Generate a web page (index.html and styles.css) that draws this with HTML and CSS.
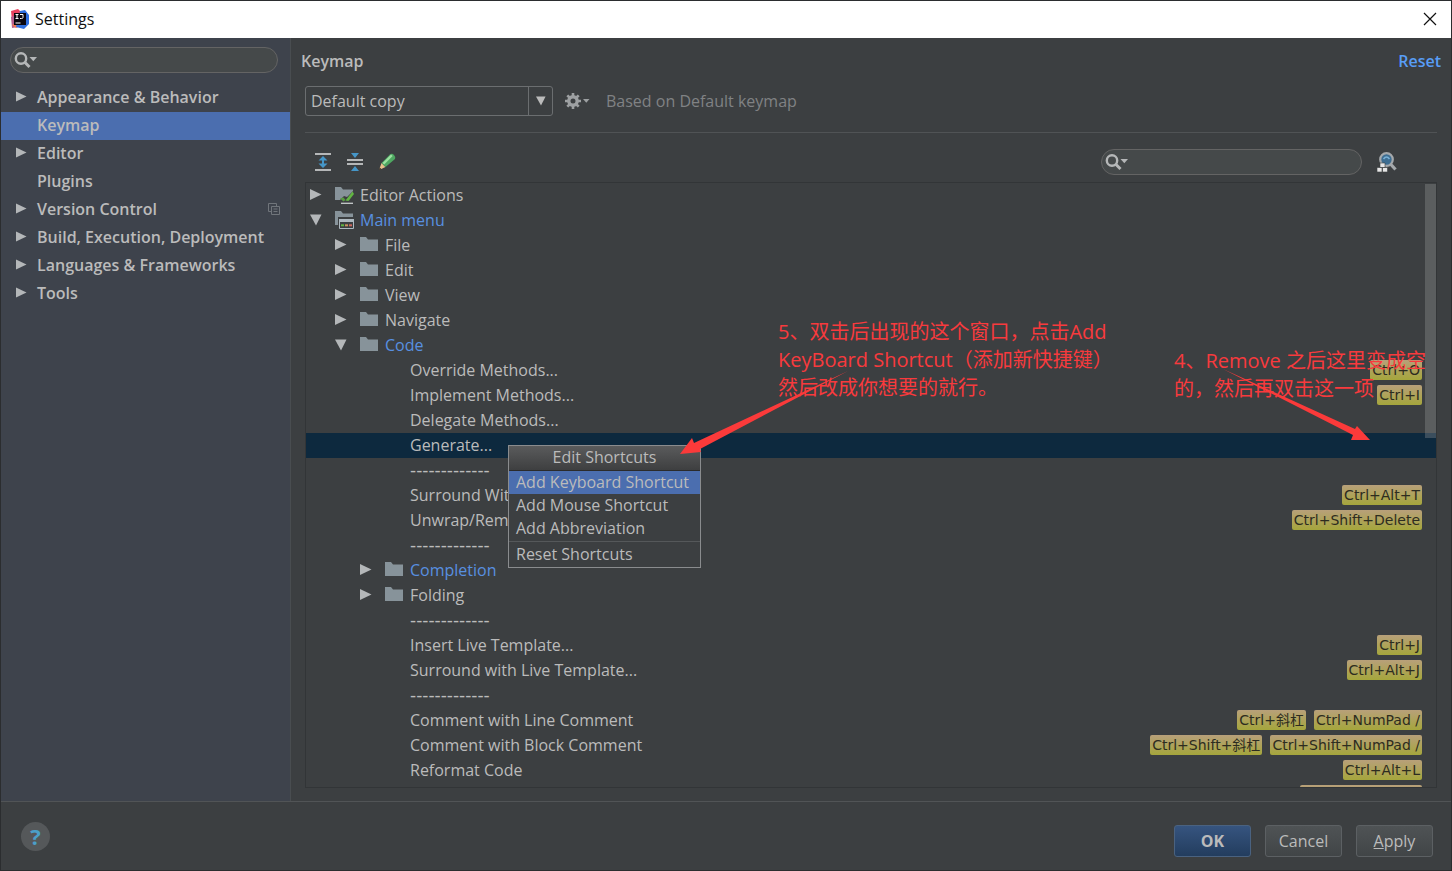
FILE: index.html
```html
<!DOCTYPE html>
<html lang="en">
<head>
    <meta charset="UTF-8">
    <meta name="viewport" content="width=device-width, initial-scale=1.0">
    <title>Settings</title>
    <link rel="stylesheet" href="styles.css">
</head>
<body>

    <!-- Shared icons -->
    <svg class="sprite" aria-hidden="true">
        <symbol id="right" viewBox="0 0 12 12"><path d="M0 0L11.500 5.500L0 11z"/></symbol>
        <symbol id="down" viewBox="0 0 12 12"><path d="M0 0.500H11.500L6 11.500z"/></symbol>
        <symbol id="search" viewBox="0 0 24 18">
            <circle cx="7" cy="7.500" r="5.200" fill="none" stroke="#b5b7b8" stroke-width="2.400"/>
            <path d="M10.500 11L15.500 16" stroke="#b5b7b8" stroke-width="3"/>
            <path d="M15.500 6h7.500l-3.700 4.300z" fill="#b5b7b8"/>
        </symbol>
        <symbol id="folder" viewBox="0 0 20 18"><path d="M0 1h6l2 2.500h10V15H0z" fill="#87939a"/></symbol>
        <symbol id="folder-edit" viewBox="0 0 20 18">
            <path d="M0 1h6l2 2.500h10V5l-6 6-3-1-4 4H0z" fill="#87939a"/>
            <path d="M10.500 14.500L17.500 5.500 19 8l-5.500 7z" fill="#62b543"/>
            <path d="M5 12.500l3.500-1 2 2.500-2 1.500z" fill="#5a9b43"/>
            <path d="M6 17.300h12" stroke="#c8cccd" stroke-width="1.300"/>
        </symbol>
        <symbol id="folder-menu" viewBox="0 0 20 18">
            <path d="M0 0h6l2 2.500h10V6H3v8H0z" fill="#87939a"/>
            <path d="M4.500 8.500h14v9h-14z" fill="#3c3f41" stroke="#aeb9c0"/>
            <path d="M4 8h15v3H4z" fill="#aeb9c0"/>
            <path d="M6 13.300h3v2H6z" fill="#62b543"/>
            <path d="M10 13.300h3v2h-3z" fill="#c9935c"/>
            <path d="M14 13.300h3v2h-3z" fill="#d06a5f"/>
        </symbol>
    </svg>

    <div class="window">
        <header class="titlebar">
            <svg class="logo" width="20" height="20" viewBox="0 0 20 20">
                <path d="M1 2L8 0l5 5-5 6-6 1z" fill="#e8415f"/>
                <path d="M1 8l4-2 3 12-6 1z" fill="#b8608f"/>
                <path d="M2 16l4 3 5-2-5-3z" fill="#f07a50"/>
                <path d="M10 2l5-1 4 5v9l-5 5-8-2z" fill="#2f6fe0"/>
                <path d="M4 4h12v12H4z" fill="#0a0710"/>
                <path d="M5.500 5.500h3M7 5.500v4M5.500 9.500h3M10 5.500h3v3q0 1-1.500 1H10M5.500 14h5" stroke="#fff" fill="none"/>
            </svg>
            <h1>Settings</h1>
            <button class="close-btn" aria-label="Close">
                <svg width="14" height="14" viewBox="0 0 14 14"><path d="M1 1l12 12M13 1L1 13" stroke="#111" stroke-width="1.200"/></svg>
            </button>
        </header>

        <div class="content">
            <nav class="sidebar">
                <label class="search-box">
                    <svg width="24" height="18"><use href="#search"/></svg>
                    <input type="text" aria-label="Search settings">
                </label>
                <ul class="sections">
                    <li><a href="#"><svg class="arrow"><use href="#right"/></svg>Appearance &amp; Behavior</a></li>
                    <li><a href="#" class="active"><span class="arrow"></span>Keymap</a></li>
                    <li><a href="#"><svg class="arrow"><use href="#right"/></svg>Editor</a></li>
                    <li><a href="#"><span class="arrow"></span>Plugins</a></li>
                    <li><a href="#"><svg class="arrow"><use href="#right"/></svg>Version Control
                        <svg class="project-icon" width="12" height="12" viewBox="0 0 12 12"><path d="M3 8.500H.5v-8h8V3M3.500 3.500h8v8h-8zM5.500 6h4M5.500 8.500h4" fill="none" stroke="#70757b"/></svg></a></li>
                    <li><a href="#"><svg class="arrow"><use href="#right"/></svg>Build, Execution, Deployment</a></li>
                    <li><a href="#"><svg class="arrow"><use href="#right"/></svg>Languages &amp; Frameworks</a></li>
                    <li><a href="#"><svg class="arrow"><use href="#right"/></svg>Tools</a></li>
                </ul>
            </nav>

            <main class="keymap">
                <div class="page-head">
                    <h2>Keymap</h2>
                    <a href="#" class="reset">Reset</a>
                </div>

                <div class="scheme">
                    <div class="combo">
                        <select aria-label="Keymap scheme"><option>Default copy</option></select>
                        <span class="combo-arrow"><svg width="10" height="10"><use href="#down"/></svg></span>
                    </div>
                    <button class="icon-btn" aria-label="Scheme actions">
                        <svg width="26" height="18" viewBox="0 0 26 18">
                            <circle cx="9" cy="9" r="4.200" fill="none" stroke="#9da0a2" stroke-width="3.400"/>
                            <path d="M9 1v3M9 14v3M1 9h3M14 9h3M3.300 3.300l2.200 2.200M12.500 12.500l2.200 2.200M14.700 3.300l-2.200 2.200M5.500 12.500l-2.200 2.200" stroke="#9da0a2" stroke-width="2.600"/>
                            <path d="M19 7h6.500l-3.200 3.700z" fill="#9da0a2"/>
                        </svg>
                    </button>
                    <span class="based-on">Based on Default keymap</span>
                </div>

                <div class="toolbar">
                    <button class="icon-btn" aria-label="Expand all">
                        <svg width="18" height="20" viewBox="0 0 18 20">
                            <path d="M1 2h16M1 18h16" stroke="#b5b7b8" stroke-width="2"/>
                            <path d="M9 4l4.500 4.500h-9zM9 16l4.500-4.500h-9z" fill="#4596c8"/><path d="M8 8h2v4H8z" fill="#4596c8"/>
                        </svg>
                    </button>
                    <button class="icon-btn" aria-label="Collapse all">
                        <svg width="18" height="20" viewBox="0 0 18 20">
                            <path d="M1 8h16M1 12h16" stroke="#b5b7b8" stroke-width="2"/>
                            <path d="M5 1h8L9 6zM5 19h8l-4-5z" fill="#4596c8"/>
                        </svg>
                    </button>
                    <button class="icon-btn" aria-label="Edit shortcut">
                        <svg width="18" height="20" viewBox="0 0 18 20">
                            <path d="M1 18l2.500-7 4 4z" fill="#e9c08b"/><path d="M1 18l.8-2.400 1.600 1.600z" fill="#222"/>
                            <path d="M3.500 11L12 2.500Q14 1 16 3t1 4L7.500 15z" fill="#4fa862"/>
                            <path d="M4.500 11L13 2.500l1.700 1.500L6.200 12.500z" fill="#9be0a0"/>
                        </svg>
                    </button>
                    <label class="search-box">
                        <svg width="24" height="18"><use href="#search"/></svg>
                        <input type="text" aria-label="Search actions">
                    </label>
                    <button class="icon-btn" aria-label="Find actions by shortcut">
                        <svg width="20" height="20" viewBox="0 0 20 20">
                            <circle cx="9.500" cy="7.500" r="6.300" fill="#3d6d91" stroke="#a4a8ab" stroke-width="2.200"/>
                            <path d="M6.500 7q3-4 6 0" fill="none" stroke="#78b0d6" stroke-width="1.500"/>
                            <path d="M13.500 12l5 5.500" stroke="#a4a8ab" stroke-width="3.200"/>
                            <path d="M3 11h5v4.500H3zM0 15.500h5V20H0zM5.500 15.500h5V20h-5z" fill="#e6e6e6" stroke="#3c3f41" stroke-width=".6"/>
                        </svg>
                    </button>
                </div>

                <div class="tree-panel">
                    <ul class="tree">
                        <li><svg class="arrow"><use href="#right"/></svg><svg class="folder"><use href="#folder-edit"/></svg>Editor Actions</li>
                        <li class="changed"><svg class="arrow"><use href="#down"/></svg><svg class="folder"><use href="#folder-menu"/></svg>Main menu</li>
                        <li class="level-1"><svg class="arrow"><use href="#right"/></svg><svg class="folder"><use href="#folder"/></svg>File</li>
                        <li class="level-1"><svg class="arrow"><use href="#right"/></svg><svg class="folder"><use href="#folder"/></svg>Edit</li>
                        <li class="level-1"><svg class="arrow"><use href="#right"/></svg><svg class="folder"><use href="#folder"/></svg>View</li>
                        <li class="level-1"><svg class="arrow"><use href="#right"/></svg><svg class="folder"><use href="#folder"/></svg>Navigate</li>
                        <li class="level-1 changed"><svg class="arrow"><use href="#down"/></svg><svg class="folder"><use href="#folder"/></svg>Code</li>
                        <li class="action">Override Methods...<span class="keys"><kbd>Ctrl+O</kbd></span></li>
                        <li class="action">Implement Methods...<span class="keys"><kbd>Ctrl+I</kbd></span></li>
                        <li class="action">Delegate Methods...</li>
                        <li class="action selected">Generate...
                            <div class="popup">
                                <div class="popup-header">Edit Shortcuts</div>
                                <button class="active">Add Keyboard Shortcut</button>
                                <button>Add Mouse Shortcut</button>
                                <button>Add Abbreviation</button>
                                <hr>
                                <button>Reset Shortcuts</button>
                            </div>
                        </li>
                        <li class="action divider">-------------</li>
                        <li class="action">Surround With...<span class="keys"><kbd>Ctrl+Alt+T</kbd></span></li>
                        <li class="action">Unwrap/Remove...<span class="keys"><kbd>Ctrl+Shift+Delete</kbd></span></li>
                        <li class="action divider">-------------</li>
                        <li class="level-2 changed"><svg class="arrow"><use href="#right"/></svg><svg class="folder"><use href="#folder"/></svg>Completion</li>
                        <li class="level-2"><svg class="arrow"><use href="#right"/></svg><svg class="folder"><use href="#folder"/></svg>Folding</li>
                        <li class="action divider">-------------</li>
                        <li class="action">Insert Live Template...<span class="keys"><kbd>Ctrl+J</kbd></span></li>
                        <li class="action">Surround with Live Template...<span class="keys"><kbd>Ctrl+Alt+J</kbd></span></li>
                        <li class="action divider">-------------</li>
                        <li class="action">Comment with Line Comment<span class="keys"><kbd>Ctrl+斜杠</kbd><kbd>Ctrl+NumPad /</kbd></span></li>
                        <li class="action">Comment with Block Comment<span class="keys"><kbd>Ctrl+Shift+斜杠</kbd><kbd>Ctrl+Shift+NumPad /</kbd></span></li>
                        <li class="action">Reformat Code<span class="keys"><kbd>Ctrl+Alt+L</kbd></span></li>
                        <li class="action"><span class="keys"><kbd class="cut-off"></kbd></span></li>
                    </ul>
                    <div class="scrollbar"></div>

                    <!-- Tutorial notes over the tree -->
                    <p class="note note-popup">5、双击后出现的这个窗口，点击Add<br>KeyBoard Shortcut（添加新快捷键）<br>然后改成你想要的就行。</p>
                    <svg class="pointer pointer-popup" width="170" height="84" viewBox="0 0 170 84"><path d="M168 0L20 78l1 3-21 2 12-16 2 5z"/></svg>
                    <p class="note note-row">4、Remove 之后这里变成空<br>的，然后再双击这一项</p>
                    <svg class="pointer pointer-row" width="148" height="72" viewBox="0 0 148 72"><path d="M1 0L133 60l2-3 13 14-19 0 2-5z"/></svg>
                </div>
            </main>
        </div>

        <footer class="buttons">
            <button class="help" aria-label="Help">?</button>
            <button class="btn ok">OK</button>
            <button class="btn">Cancel</button>
            <button class="btn"><u>A</u>pply</button>
        </footer>
    </div>

</body>
</html>
```
FILE: styles.css
```css
* {
    box-sizing: border-box;
}
body {
    margin: 0;
    font-family: 'Open Sans', 'Noto Sans CJK SC', sans-serif;
    font-size: 16px;
    color: #bbb;
    background: #3c3f41;
}
button, input, select {
    font: inherit;
    color: inherit;
}
button {
    padding: 0;
    border: none;
    background: none;
    cursor: pointer;
}
a {
    color: inherit;
    text-decoration: none;
}
ul {
    margin: 0;
    padding: 0;
    list-style: none;
}
svg {
    display: block;
    flex: none;
}
.sprite {
    position: absolute;
    width: 0;
    height: 0;
}
.window {
    display: flex;
    flex-direction: column;
    height: 100vh;
    border: 1px solid #2b2d2f;
}
.titlebar {
    display: flex;
    align-items: center;
    gap: 5px;
    height: 37px;
    padding: 0 14px 1px 9px;
    background: #fff;
    color: #111;
}
.titlebar h1 {
    flex: 1;
    margin: 0;
    font-size: 16px;
    font-weight: 400;
}
.content {
    display: flex;
    flex: 1;
    min-height: 0;
}

/* Sidebar */
.sidebar {
    width: 290px;
    padding-top: 9px;
    background: #3e434c;
    border-right: 1px solid #494d50;
}
.search-box {
    display: flex;
    align-items: center;
    height: 26px;
    padding-left: 3px;
    border: 1px solid #646464;
    border-radius: 13px;
    background: #45494a;
}
.search-box input {
    flex: 1;
    min-width: 0;
    border: none;
    outline: none;
    background: none;
}
.sidebar .search-box {
    margin: 0 12px 11px 9px;
}
.sections a {
    display: flex;
    align-items: center;
    height: 28px;
    padding: 0 10px 2px 15px;
    font-weight: 600;
}
.sections .active {
    background: #4b6eaf;
}
.arrow {
    width: 12px;
    height: 12px;
    fill: #b4b7b9;
}
.sections .arrow {
    width: 11px;
    margin-right: 10px;
}
.project-icon {
    margin-left: auto;
}

/* Keymap page */
.keymap {
    display: flex;
    flex-direction: column;
    flex: 1;
    min-width: 0;
    padding: 11px 14px 13px;
}
.page-head {
    display: flex;
    justify-content: space-between;
    margin: 0 -4px;
    font-weight: 600;
    line-height: 24px;
}
.page-head h2 {
    margin: 0;
    font-size: 16px;
    font-weight: 600;
}
.page-head .reset {
    color: #589df6;
}
.scheme {
    display: flex;
    align-items: center;
    height: 60px;
    padding-bottom: 4px;
    border-bottom: 1px solid #505355;
}
.combo {
    display: flex;
    width: 248px;
    height: 30px;
    margin-right: 11px;
    border: 1px solid #6b6e70;
    border-radius: 3px;
}
.combo select {
    flex: 1;
    padding: 0 5px;
    border: none;
    outline: none;
    appearance: none;
    background: none;
}
.combo-arrow {
    display: flex;
    align-items: center;
    justify-content: center;
    width: 24px;
    border-left: 1px solid #6b6e70;
    fill: #bbb;
}
.based-on {
    margin-left: 16px;
    color: #808284;
}
.toolbar {
    display: flex;
    align-items: center;
    gap: 14px;
    height: 49px;
    padding: 9px 40px 0 9px;
}
.toolbar .search-box {
    width: 261px;
    margin-right: 1px;
    margin-left: auto;
}

/* Actions tree */
.tree-panel {
    position: relative;
    flex: 1;
    min-height: 0;
    overflow: hidden;
    border: 1px solid #323537;
}
.tree li {
    position: relative;
    display: flex;
    align-items: center;
    height: 25px;
    padding: 0 14px 1px 4px;
    white-space: nowrap;
}
.tree .level-1 {
    padding-left: 29px;
}
.tree .level-2 {
    padding-left: 54px;
}
.tree .action {
    padding-left: 104px;
}
.tree .divider {
    font-family: 'DejaVu Sans', sans-serif;
    font-size: 17px;
}
.tree .changed {
    color: #5890e0;
}
.tree .selected {
    background: #0d293e;
}
.tree .arrow {
    margin-right: 13px;
}
.folder {
    width: 20px;
    height: 18px;
    margin-right: 5px;
}
.keys {
    display: flex;
    gap: 8px;
    margin-left: auto;
}
kbd {
    height: 20px;
    padding: 0 2px;
    border-radius: 2px;
    background: linear-gradient(#b8a07a, #a5a63c);
    color: #2d2c20;
    font-family: 'DejaVu Sans', 'Noto Sans CJK SC', sans-serif;
    font-size: 14px;
    line-height: 20px;
}
.cut-off {
    width: 122px;
}
.scrollbar {
    position: absolute;
    top: 1px;
    right: 0;
    width: 11px;
    height: 42%;
    background: rgba(166, 166, 166, 0.3);
}

/* Edit Shortcuts popup */
.popup {
    position: absolute;
    top: 12px;
    left: 202px;
    z-index: 1;
    width: 193px;
    padding-bottom: 1px;
    border: 1px solid #8a8c8e;
    background: #3c3f41;
}
.popup-header {
    height: 25px;
    border-bottom: 1px solid #2b2b2b;
    background: linear-gradient(#5a5b5c, #3e3f40);
    line-height: 23px;
    text-align: center;
}
.popup button {
    display: block;
    width: 100%;
    height: 23px;
    padding: 0 7px;
    line-height: 23px;
    text-align: left;
}
.popup .active {
    background: #4b6eaf;
}
.popup hr {
    margin: 1px 0;
    border: none;
    border-top: 1px solid #55585a;
}

/* Notes */
.note {
    position: absolute;
    z-index: 2;
    margin: 0;
    color: #f83a3d;
    font-size: 20px;
    line-height: 28px;
    white-space: nowrap;
}
.note-popup {
    top: 135px;
    left: 472px;
}
.note-row {
    top: 164px;
    right: 10px;
}
.pointer {
    position: absolute;
    z-index: 2;
    fill: #fb3a3a;
}
.pointer-popup {
    top: 188px;
    left: 374px;
}
.pointer-row {
    top: 186px;
    right: 66px;
}

/* Footer */
.buttons {
    display: flex;
    align-items: center;
    gap: 14px;
    height: 69px;
    padding: 9px 18px 0 20px;
    border-top: 1px solid #515456;
}
.btn {
    width: 77px;
    height: 32px;
    border: 1px solid #5c6063;
    border-radius: 3px;
    background: linear-gradient(#4f5355, #414547);
}
.ok {
    border-color: #4a6280;
    background: linear-gradient(#36547f, #233d5e);
    font-weight: 700;
}
.help {
    width: 29px;
    height: 29px;
    margin-right: auto;
    margin-bottom: 8px;
    border-radius: 50%;
    background: #55585a;
    color: #4b9fc9;
    font-size: 22px;
    font-weight: 700;
    line-height: 29px;
}
```
